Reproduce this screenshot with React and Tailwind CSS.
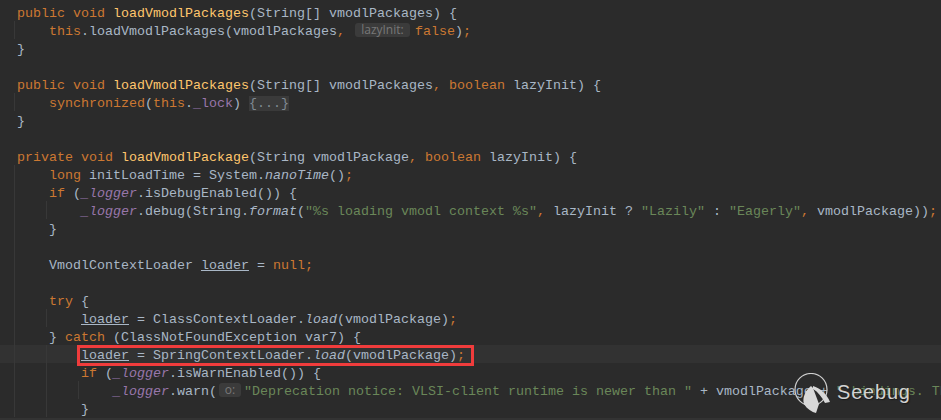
const K = ({ children }) => <span className="text-[#cc7832]">{children}</span>;
const M = ({ children }) => <span className="text-[#ffc66d]">{children}</span>;
const F = ({ children }) => <span className="text-[#9876aa]">{children}</span>;
const Lg = () => <span className="text-[#9876aa] italic">_logger</span>;
const S = ({ children }) => <span className="text-[#6a8759]">{children}</span>;
const I = ({ children }) => <span className="italic">{children}</span>;
const U = ({ children }) => <span className="underline underline-offset-1">{children}</span>;

const Hint = ({ children, className }) => (
  <span
    className={`inline-block h-[14px] rounded-[3px] bg-[#3b3b3b] text-[#787878] text-center text-[12px] leading-[14px] align-[1px] font-['Open_Sans',sans-serif] ${className}`}
  >
    {children}
  </span>
);

// one editor row, guides are the indent lines drawn behind the code
const Line = ({ children, guides = [], active }) => (
  <div
    className={`relative h-[18px] pl-[17px] leading-[22px] whitespace-pre ${active ? "bg-[#323232]" : ""}`}
  >
    {guides.includes(1) && <span className="absolute left-[14px] top-0 h-full w-px bg-[#383838]" />}
    {guides.includes(2) && <span className="absolute left-[46px] top-0 h-full w-px bg-[#383838]" />}
    {guides.includes(3) && <span className="absolute left-[78px] top-0 h-full w-px bg-[#383838]" />}
    {children}
  </div>
);

const Watermark = () => (
  <div className="absolute left-[794px] top-[373px] flex items-start">
    <svg width="38" height="42" viewBox="0 0 38 42" fill="none">
      <circle cx="17" cy="16.5" r="16" stroke="#cfcfcf" strokeWidth="1.2" />
      <path d="M17 13 C11 18 8 25 10 31 C13 36 18 39 22 40 L25 31 L19 15 Z" fill="#d8d8d8" />
      <path d="M19 13 C26 15 33 21 36 29 L31 30 C28 24 24 19 19 16 Z" fill="#d8d8d8" />
    </svg>
    <span className="ml-[5px] mt-[6px] text-[20px] leading-[26px] tracking-[0.8px] text-[#d2d2d2] font-['Liberation_Sans',sans-serif] [text-shadow:1px_1px_1px_#1a1a1a]">
      Seebug
    </span>
  </div>
);

export default function App() {
  return (
    <div className="relative h-[420px] w-[941px] overflow-hidden border-b-2 border-[#333333] bg-[#2b2b2b] pt-[3px] text-[13.33px] text-[#a9b7c6] font-['Liberation_Mono',monospace]">
      <Line>
        <K>public void </K><M>loadVmodlPackages</M>(String[] vmodlPackages) {"{"}
      </Line>
      <Line guides={[1]}>
        {"    "}<K>this</K>.loadVmodlPackages(vmodlPackages<K>,</K>{" "}
        <Hint className="ml-[2px] mr-[5px] w-[55px]">lazyInit:</Hint><K>false</K>)<K>;</K>
      </Line>
      <Line>{"}"}</Line>
      <Line />
      <Line>
        <K>public void </K><M>loadVmodlPackages</M>(String[] vmodlPackages<K>, boolean </K>lazyInit) {"{"}
      </Line>
      <Line guides={[1]}>
        {"    "}<K>synchronized</K>(<K>this</K>.<F>_lock</F>) <span className="bg-[#3a3a3a] text-[#808a94]">{"{...}"}</span>
      </Line>
      <Line>{"}"}</Line>
      <Line />
      <Line>
        <K>private void </K><M>loadVmodlPackage</M>(String vmodlPackage<K>, boolean </K>lazyInit) {"{"}
      </Line>
      <Line guides={[1]}>
        {"    "}<K>long </K>initLoadTime = System.<I>nanoTime</I>()<K>;</K>
      </Line>
      <Line guides={[1]}>
        {"    "}<K>if </K>(<Lg />.isDebugEnabled()) {"{"}
      </Line>
      <Line guides={[1, 2]}>
        {"        "}<Lg />.debug(String.<I>format</I>(<S>"%s loading vmodl context %s"</S><K>, </K>lazyInit ? <S>"Lazily"</S> : <S>"Eagerly"</S><K>, </K>vmodlPackage))<K>;</K>
      </Line>
      <Line guides={[1]}>{"    }"}</Line>
      <Line guides={[1]} />
      <Line guides={[1]}>
        {"    "}VmodlContextLoader <U>loader</U> = <K>null;</K>
      </Line>
      <Line guides={[1]} />
      <Line guides={[1]}>
        {"    "}<K>try </K>{"{"}
      </Line>
      <Line guides={[1, 2]}>
        {"        "}<U>loader</U> = ClassContextLoader.<I>load</I>(vmodlPackage)<K>;</K>
      </Line>
      <Line guides={[1]}>
        {"    } "}<K>catch </K>(ClassNotFoundException var7) {"{"}
      </Line>
      <Line guides={[1, 2]} active>
        {"        "}<U>loader</U> = SpringContextLoader.<I>load</I>(vmodlPackage)<K>;</K>
        {/* red annotation drawn over the code */}
        <span className="absolute left-[77px] top-0 h-[21px] w-[397px] border-[3px] border-[#f03c3c]" />
      </Line>
      <Line guides={[1, 2]}>
        {"        "}<K>if </K>(<Lg />.isWarnEnabled()) {"{"}
      </Line>
      <Line guides={[1, 2, 3]}>
        {"            "}<Lg />.warn(<Hint className="ml-[2px] mr-[3px] w-[22px]">o:</Hint><S>"Deprecation notice: VLSI-client runtime is newer than "</S> + vmodlPackage + <S>" bindings. Th</S>
      </Line>
      <Line guides={[1, 2]}>{"        }"}</Line>
      <Watermark />
    </div>
  );
}
